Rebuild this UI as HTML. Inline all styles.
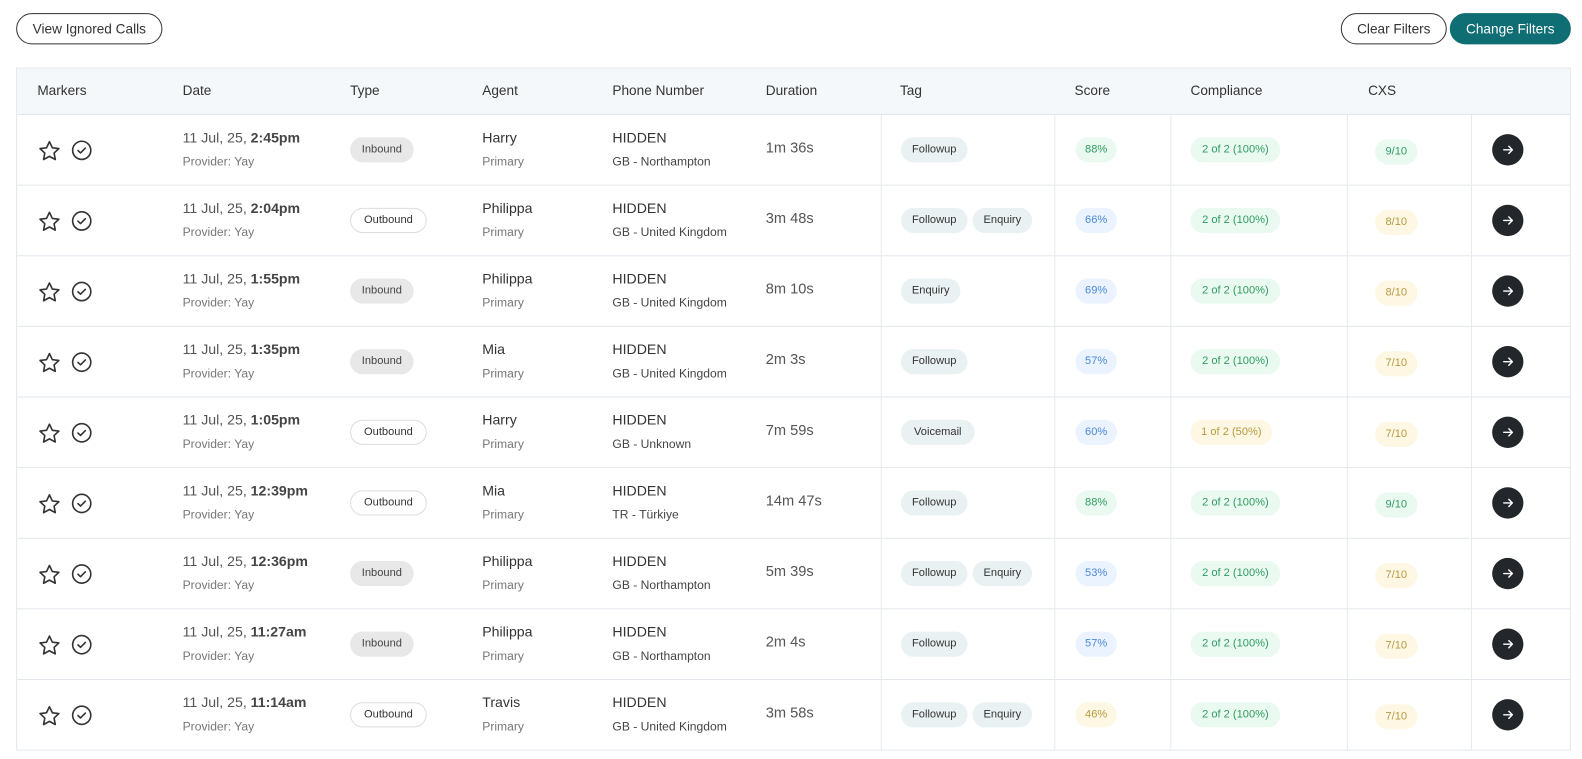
<!DOCTYPE html>
<html><head><style>
*{box-sizing:border-box;margin:0;padding:0}
body{width:1582px;height:758px;overflow:hidden;background:#fff;font-family:"Liberation Sans",sans-serif;color:#333;position:relative}
#w{position:absolute;left:0;top:0;width:1568px;height:752px;transform:scale(1.0089);transform-origin:0 0}
.btn{position:absolute;top:13px;height:31px;border-radius:16px;font-size:13.5px;line-height:29px;text-align:center;border:1.3px solid #333;color:#333;background:#fff}
.tbl{position:absolute;left:16px;top:67px;width:1541px;height:677px;border:1px solid #e2e7ec;border-bottom:none}
.hd{position:absolute;left:0;top:0;width:100%;height:46px;background:#f5f8fa;border-bottom:1px solid #e2e7ec}
.h{position:absolute;top:14px;font-size:13.5px;color:#333}
.row{position:absolute;left:0;width:100%;height:70px;border-bottom:1px solid #e2e7ec}
.vl{position:absolute;top:0;width:1px;height:69px;background:#e6eaee}
.t{position:absolute;font-size:14px;color:#333}
.s{position:absolute;font-size:12px;color:#777}
.p{position:absolute;top:22px;height:25px;border-radius:13px;font-size:11px;line-height:25px;text-align:center}
.gray{background:#e8e8e8;color:#444}
.out{background:#fff;border:1px solid #ddd;color:#333;line-height:23px}
.tag{background:#eaf1f2;color:#333}
.g{background:#eafaf1;color:#2e9a62}
.b{background:#eaf3ff;color:#4b88d6}
.y{background:#fdf7e4;color:#b69a3e}
.arr{position:absolute;left:1462px;top:19px;width:31px;height:31px;border-radius:50%;background:#23272b}
</style></head><body>
<div id="w">
<div class="btn" style="left:16px;width:145px">View Ignored Calls</div>
<div class="btn" style="left:1329px;width:105px">Clear Filters</div>
<div class="btn" style="left:1437px;width:120px;background:#0e6e74;border-color:#0e6e74;color:#fff">Change Filters</div>
<div class="tbl">
<div class="hd">
<span class="h" style="left:20px">Markers</span><span class="h" style="left:164px">Date</span><span class="h" style="left:330px">Type</span><span class="h" style="left:461px">Agent</span><span class="h" style="left:590px">Phone Number</span><span class="h" style="left:742px">Duration</span><span class="h" style="left:875px">Tag</span><span class="h" style="left:1048px">Score</span><span class="h" style="left:1163px">Compliance</span><span class="h" style="left:1339px">CXS</span>
</div>
<div id="rows"></div>
</div>
</div>
<script>
const d=[
["2:45pm","i","Harry","GB - Northampton","1m 36s",["Followup"],"88%","g","2 of 2 (100%)","g","9/10","g"],
["2:04pm","o","Philippa","GB - United Kingdom","3m 48s",["Followup","Enquiry"],"66%","b","2 of 2 (100%)","g","8/10","y"],
["1:55pm","i","Philippa","GB - United Kingdom","8m 10s",["Enquiry"],"69%","b","2 of 2 (100%)","g","8/10","y"],
["1:35pm","i","Mia","GB - United Kingdom","2m 3s",["Followup"],"57%","b","2 of 2 (100%)","g","7/10","y"],
["1:05pm","o","Harry","GB - Unknown","7m 59s",["Voicemail"],"60%","b","1 of 2 (50%)","y","7/10","y"],
["12:39pm","o","Mia","TR - Türkiye","14m 47s",["Followup"],"88%","g","2 of 2 (100%)","g","9/10","g"],
["12:36pm","i","Philippa","GB - Northampton","5m 39s",["Followup","Enquiry"],"53%","b","2 of 2 (100%)","g","7/10","y"],
["11:27am","i","Philippa","GB - Northampton","2m 4s",["Followup"],"57%","b","2 of 2 (100%)","g","7/10","y"],
["11:14am","o","Travis","GB - United Kingdom","3m 58s",["Followup","Enquiry"],"46%","y","2 of 2 (100%)","g","7/10","y"]];
let h="";
d.forEach((r,i)=>{
let tags="",x=876;
r[5].forEach(t=>{const w=t=="Followup"?66:t=="Enquiry"?59:73;tags+=`<span class="p tag" style="left:${x}px;width:${w}px">${t}</span>`;x+=w+5;});
h+=`<div class="row" style="top:${46+70*i}px">
<div class="vl" style="left:856px"></div><div class="vl" style="left:1028px"></div><div class="vl" style="left:1143px"></div><div class="vl" style="left:1318px"></div><div class="vl" style="left:1441px"></div>
<svg style="position:absolute;left:20px;top:24px" width="24" height="24" viewBox="0 0 24 24" fill="none" stroke="#333" stroke-width="1.6" stroke-linejoin="round"><path d="M12 2.5l2.9 6 6.4.8-4.7 4.4 1.2 6.4L12 17l-5.8 3.1 1.2-6.4L2.7 9.3l6.4-.8z"/></svg>
<svg style="position:absolute;left:53px;top:24px" width="22" height="22" viewBox="0 0 22 22" fill="none" stroke="#333" stroke-width="1.6"><circle cx="11" cy="11" r="9"/><path d="M7.3 11.2l2.5 2.4 4.8-4.8" stroke-linecap="round" stroke-linejoin="round"/></svg>
<span class="t" style="left:164px;top:14px;color:#555">11 Jul, 25, <b style="color:#444">${r[0]}</b></span>
<span class="s" style="left:164px;top:39px">Provider: Yay</span>
${r[1]=="i"?'<span class="p gray" style="left:330px;width:63px">Inbound</span>':'<span class="p out" style="left:330px;width:76px">Outbound</span>'}
<span class="t" style="left:461px;top:14px">${r[2]}</span><span class="s" style="left:461px;top:39px">Primary</span>
<span class="t" style="left:590px;top:14px">HIDDEN</span><span class="s" style="left:590px;top:39px;color:#444">${r[3]}</span>
<span class="t" style="left:742px;top:25px;color:#555;font-size:14.5px">${r[4]}</span>
${tags}
<span class="p ${r[7]}" style="left:1049px;width:41px">${r[6]}</span>
<span class="p ${r[9]}" style="left:1163px;width:${r[8].length>12?89:81}px">${r[8]}</span>
<span class="p ${r[11]}" style="left:1346px;width:42px;top:24px">${r[10]}</span>
<div class="arr"><svg width="31" height="31" viewBox="0 0 31 31" fill="none" stroke="#fff" stroke-width="1.4" stroke-linecap="round" stroke-linejoin="round"><path d="M11.5 15.5h8M16.5 12l3.5 3.5-3.5 3.5"/></svg></div>
</div>`;});
document.getElementById("rows").innerHTML=h;
</script>
</body></html>
